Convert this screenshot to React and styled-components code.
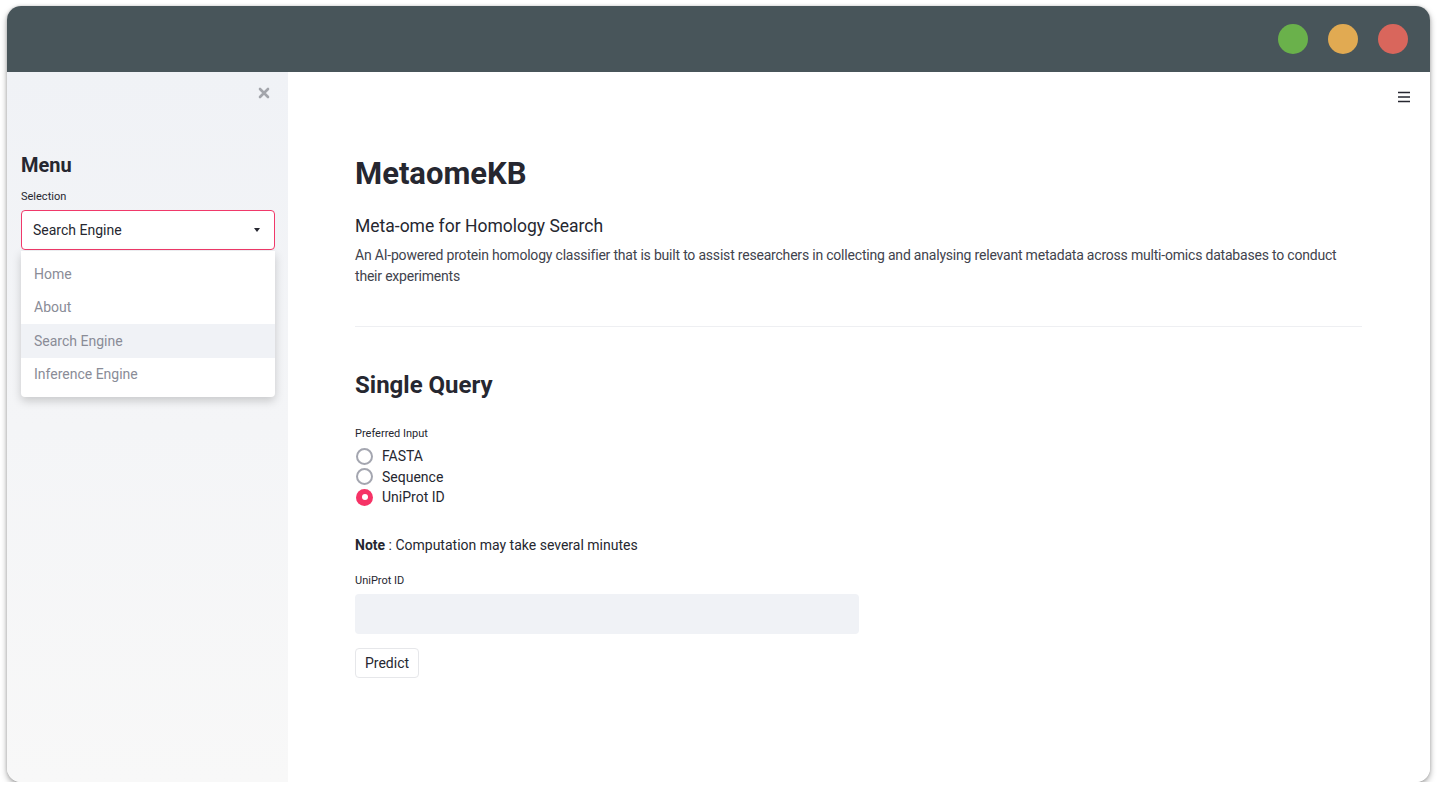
import React from "react";
import styled, { createGlobalStyle } from "styled-components";

const GlobalStyle = createGlobalStyle`
  html, body {
    margin: 0;
    padding: 0;
    background: #ffffff;
  }
  body {
    font-family: Roboto, "Liberation Sans", sans-serif;
    color: #262730;
  }
  * {
    box-sizing: border-box;
  }
`;

const menuItems = ["Home", "About", "Search Engine", "Inference Engine"];
const inputOptions = ["FASTA", "Sequence", "UniProt ID"];

export default function App() {
  return (
    <>
      <GlobalStyle />
      <Window>
        <TitleBar>
          <Dot color="#6ab14b" />
          <Dot color="#e1aa52" />
          <Dot color="#d9665c" />
        </TitleBar>
        <Body>
          <Sidebar>
            <CloseRow>
              <CloseButton>
                <svg width="12" height="12" viewBox="0 0 12 12">
                  <path
                    d="M2 2 L10 10 M10 2 L2 10"
                    stroke="#a3a5ab"
                    strokeWidth="2.6"
                    strokeLinecap="round"
                  />
                </svg>
              </CloseButton>
            </CloseRow>
            <SideTitle>Menu</SideTitle>
            <SmallLabel gap={11} below={6}>Selection</SmallLabel>
            <SelectWrap>
              <SelectBox>
                <span>Search Engine</span>
                <Caret />
              </SelectBox>
              <Dropdown>
                {menuItems.map((item) => (
                  <DropItem key={item} active={item === "Search Engine"}>
                    {item}
                  </DropItem>
                ))}
              </Dropdown>
            </SelectWrap>
          </Sidebar>
          <Main>
            <MenuIcon>
              <svg width="14" height="12" viewBox="0 0 14 12">
                <path
                  d="M1 1.5 H13 M1 6 H13 M1 10.5 H13"
                  stroke="#262730"
                  strokeWidth="1.6"
                />
              </svg>
            </MenuIcon>
            <Content>
              <Title>MetaomeKB</Title>
              <Subtitle>Meta-ome for Homology Search</Subtitle>
              <Paragraph>
                An AI-powered protein homology classifier that is built to
                assist researchers in collecting and analysing relevant metadata
                across multi-omics databases to conduct their experiments
              </Paragraph>
              <Rule />
              <SectionTitle>Single Query</SectionTitle>
              <SmallLabel gap={26} below={7}>Preferred Input</SmallLabel>
              <RadioGroup>
                {inputOptions.map((opt) => (
                  <RadioRow key={opt}>
                    <RadioCircle checked={opt === "UniProt ID"} />
                    <span>{opt}</span>
                  </RadioRow>
                ))}
              </RadioGroup>
              <Note>
                <b>Note</b> : Computation may take several minutes
              </Note>
              <SmallLabel gap={0} below={6}>UniProt ID</SmallLabel>
              <TextInput />
              <Button>Predict</Button>
            </Content>
          </Main>
        </Body>
      </Window>
    </>
  );
}

const Window = styled.div`
  margin: 6px 11px 0 7px;
  width: 1423px;
  height: 776px;
  border-radius: 14px;
  overflow: hidden;
  display: flex;
  flex-direction: column;
  background: #ffffff;
  box-shadow: 0 3px 6px rgba(0, 0, 0, 0.35), 0 0 3px rgba(0, 0, 0, 0.15);
`;

const TitleBar = styled.div`
  height: 66px;
  flex-shrink: 0;
  background: #48555a;
  display: flex;
  align-items: center;
  justify-content: flex-end;
  gap: 20px;
  padding-right: 22px;
`;

const Dot = styled.div`
  width: 30px;
  height: 30px;
  border-radius: 50%;
  background: ${(p) => p.color};
`;

const Body = styled.div`
  flex: 1;
  display: flex;
  min-height: 0;
`;

const Sidebar = styled.div`
  width: 281px;
  flex-shrink: 0;
  background: linear-gradient(180deg, #f0f2f6 0%, #f8f8f8 100%);
  padding: 0 13px 0 14px;
`;

const CloseRow = styled.div`
  display: flex;
  justify-content: flex-end;
  height: 44px;
  padding-top: 13px;
  padding-right: 3px;
`;

const CloseButton = styled.div`
  width: 16px;
  height: 16px;
  display: flex;
  align-items: center;
  justify-content: center;
`;

const SideTitle = styled.h2`
  margin: 35px 0 0;
  font-size: 20px;
  font-weight: 700;
  line-height: 28px;
  color: #262730;
`;

const SmallLabel = styled.div`
  font-size: 11px;
  line-height: 14px;
  color: #262730;
  margin: ${(p) => p.gap}px 0 ${(p) => p.below}px;
`;

const SelectWrap = styled.div`
  position: relative;
`;

const SelectBox = styled.div`
  height: 40px;
  border: 1px solid #f0396a;
  border-radius: 4px;
  background: #ffffff;
  display: flex;
  align-items: center;
  justify-content: space-between;
  padding: 0 14px 0 11px;
  font-size: 14px;
  color: #262730;
`;

const Caret = styled.div`
  width: 0;
  height: 0;
  border-left: 3.5px solid transparent;
  border-right: 3.5px solid transparent;
  border-top: 4px solid #262730;
`;

const Dropdown = styled.div`
  position: absolute;
  top: 41px;
  left: 0;
  right: 0;
  background: #ffffff;
  border-radius: 0 0 4px 4px;
  box-shadow: 0 4px 10px rgba(0, 0, 0, 0.18);
  padding: 6px 0;
`;

const DropItem = styled.div`
  height: 33.5px;
  display: flex;
  align-items: center;
  padding-left: 13px;
  font-size: 14px;
  color: #8a8c97;
  background: ${(p) => (p.active ? "#f0f2f6" : "transparent")};
`;

const Main = styled.div`
  flex: 1;
  position: relative;
  background: #ffffff;
`;

const MenuIcon = styled.div`
  position: absolute;
  top: 16px;
  right: 19px;
`;

const Content = styled.div`
  width: 1007px;
  margin-left: 67px;
  padding-top: 81px;
`;

const Title = styled.h1`
  margin: 0;
  font-size: 31px;
  font-weight: 700;
  line-height: 42px;
  color: #262730;
`;

const Subtitle = styled.h3`
  margin: 19px 0 0;
  font-size: 17.5px;
  font-weight: 400;
  line-height: 24px;
  color: #262730;
`;

const Paragraph = styled.p`
  margin: 7px 0 0;
  font-size: 14px;
  line-height: 21px;
  letter-spacing: -0.2px;
  color: #41434d;
`;

const Rule = styled.hr`
  margin: 39px 0 0;
  border: none;
  border-top: 1px solid #eeeff2;
`;

const SectionTitle = styled.h2`
  margin: 42px 0 0;
  font-size: 24px;
  font-weight: 700;
  line-height: 32px;
  color: #262730;
`;

const RadioGroup = styled.div`
  display: flex;
  flex-direction: column;
  margin-top: -2px;
`;

const RadioRow = styled.div`
  height: 20.5px;
  display: flex;
  align-items: center;
  gap: 9px;
  font-size: 14px;
  color: #262730;
`;

const RadioCircle = styled.div`
  width: 17px;
  height: 17px;
  margin-left: 1px;
  border-radius: 50%;
  border: ${(p) => (p.checked ? "none" : "2px solid #a4a6b0")};
  background: ${(p) => (p.checked ? "#f63366" : "#ffffff")};
  display: flex;
  align-items: center;
  justify-content: center;
  &::after {
    content: "";
    display: ${(p) => (p.checked ? "block" : "none")};
    width: 6px;
    height: 6px;
    border-radius: 50%;
    background: #ffffff;
  }
`;

const Note = styled.p`
  margin: 27px 0 18px;
  font-size: 14px;
  line-height: 21px;
  color: #262730;
  b {
    font-weight: 700;
  }
`;

const TextInput = styled.div`
  width: 504px;
  height: 40px;
  border-radius: 4px;
  background: #f0f2f6;
`;

const Button = styled.button`
  margin-top: 14px;
  height: 30px;
  padding: 0 9px;
  background: #ffffff;
  border: 1px solid #e6e7ea;
  border-radius: 4px;
  font-family: inherit;
  font-size: 14px;
  color: #262730;
`;
